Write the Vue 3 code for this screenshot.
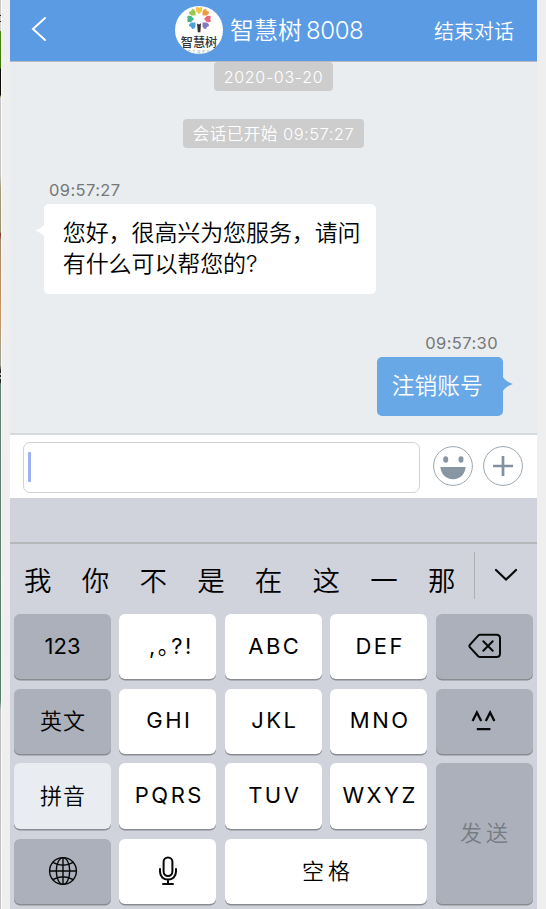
<script setup>
const candidates = ['我', '你', '不', '是', '在', '这', '一', '那']
const petals = [
  { angle: -90, color: '#49b48c' },
  { angle: -45, color: '#9cc84b' },
  { angle: 0, color: '#f2c644' },
  { angle: 45, color: '#f09a43' },
  { angle: 90, color: '#e9677c' },
  { angle: 135, color: '#8278bd' },
  { angle: -135, color: '#4aa4dc' }
]
const keys = [
  { label: '123', type: 'dark', cls: 'num' },
  { label: ',。?!', type: '', cls: 'punct' },
  { label: 'ABC' },
  { label: 'DEF' },
  { icon: 'delete', type: 'dark' },
  { label: '英文', type: 'dark', cls: 'cn' },
  { label: 'GHI' },
  { label: 'JKL' },
  { label: 'MNO' },
  { icon: 'face', type: 'dark' },
  { label: '拼音', type: 'pale', cls: 'cn' },
  { label: 'PQRS' },
  { label: 'TUV' },
  { label: 'WXYZ' },
  { label: '发送', type: 'dark send', cls: 'cn wide' },
  { icon: 'globe', type: 'dark' },
  { icon: 'mic' },
  { label: '空格', type: 'space', cls: 'cn wide' }
]
</script>

<template>
  <div class="page">
    <div class="edge"></div>
    <main class="phone">
      <header class="header">
        <svg class="back" viewBox="0 0 16 26"><path d="M14 2 L2 13 L14 24" /></svg>
        <div class="title">
          <svg class="logo" viewBox="0 0 48 48">
            <defs><clipPath id="disc"><circle cx="24" cy="24" r="24" /></clipPath></defs>
            <circle cx="24" cy="24" r="24" fill="#fff" />
            <g clip-path="url(#disc)">
              <g transform="translate(24 13)">
                <path
                  v-for="p in petals"
                  :key="p.angle"
                  :fill="p.color"
                  :transform="`rotate(${p.angle})`"
                  d="M0 -5 L-2.9 -7.8 Q-4 -11.6 -1.8 -11.9 L0 -11.2 L1.8 -11.9 Q4 -11.6 2.9 -7.8 Z"
                />
              </g>
              <path d="M22 17.6 L24 18.6 L26 17.2 L25.4 26.3 H22.8 Z" fill="#333" />
              <text x="24" y="41.2" class="logo-name">智慧树</text>
              <text x="24.5" y="47.8" class="logo-sub">STREE</text>
            </g>
          </svg>
          <span class="name">智慧树<i>8008</i></span>
        </div>
        <span class="end">结束对话</span>
      </header>

      <section class="chat">
        <div class="chip date">2020-03-20</div>
        <div class="chip start">会话已开始 09:57:27</div>
        <div class="time in">09:57:27</div>
        <div class="bubble in">
          <svg class="tail" viewBox="0 0 10 16"><path d="M10 0 Q8 5 0 7.5 Q8 10 10 15 Z" fill="#fff" /></svg>
          您好，很高兴为您服务，请问<br />有什么可以帮您的?
        </div>
        <div class="time out">09:57:30</div>
        <div class="bubble out">
          <svg class="tail" viewBox="0 0 10 16"><path d="M0 0 Q2 4 10 7 Q2 10 0 14 Z" fill="#68a8e7" /></svg>
          注销账号
        </div>
      </section>

      <section class="composer">
        <div class="field"><span class="caret"></span></div>
        <svg class="round" viewBox="0 0 40 40">
          <circle cx="20" cy="20" r="19.4" class="ring" />
          <ellipse cx="12.7" cy="13.5" rx="2.5" ry="3.3" fill="#8796a2" />
          <ellipse cx="28" cy="13.5" rx="2.5" ry="3.3" fill="#8796a2" />
          <path d="M7.4 21 H32.6 C32.2 28 27 33.3 20 33.3 C13 33.3 7.8 28 7.4 21 Z" fill="#8796a2" />
        </svg>
        <svg class="round" viewBox="0 0 40 40">
          <circle cx="20" cy="20" r="19.4" class="ring" />
          <path d="M10 20 H30 M20 10 V30" stroke="#8291a0" stroke-width="2.7" />
        </svg>
      </section>

      <section class="keyboard">
        <div class="toolbar"></div>
        <div class="candidates">
          <span v-for="c in candidates" :key="c" class="cand">{{ c }}</span>
          <span class="sep"></span>
          <svg class="chev" viewBox="0 0 24 14"><path d="M2 2 L12 11.6 L22 2" /></svg>
        </div>
        <div class="keys">
          <div v-for="(k, i) in keys" :key="i" class="key" :class="k.type">
            <span v-if="k.label" class="label" :class="k.cls">{{ k.label }}</span>
            <svg v-else-if="k.icon === 'delete'" class="glyph del" width="34" height="26" viewBox="0 0 34 26">
              <path d="M12 1.8 H28.5 Q32 1.8 32 5.3 V20.5 Q32 24 28.5 24 H12 Q11 24 10.2 23.2 L2 14.4 Q0.8 13 2 11.6 L10.2 2.6 Q11 1.8 12 1.8 Z" />
              <path d="M15.3 8.3 L24.7 17.7 M24.7 8.3 L15.3 17.7" />
            </svg>
            <svg v-else-if="k.icon === 'face'" class="glyph face" width="26" height="22" viewBox="0 0 26 22">
              <path d="M1.6 11 L5.9 2.5 L10.2 11 M14.8 11 L19.1 2.5 L23.4 11 M5.8 19.2 H19.4" />
            </svg>
            <svg v-else-if="k.icon === 'globe'" class="glyph globe" width="30" height="30" viewBox="0 0 30 30">
              <circle cx="15" cy="15" r="13.4" />
              <ellipse cx="15" cy="15" rx="6.7" ry="13.4" />
              <path d="M1.6 15 H28.4 M15 1.6 V28.4 M4.8 6.4 Q15 12.2 25.2 6.4 M4.8 23.6 Q15 17.8 25.2 23.6" />
            </svg>
            <svg v-else class="glyph mic" width="20" height="30" viewBox="0 0 20 30">
              <rect x="5.6" y="1.4" width="8.8" height="18.6" rx="4.4" />
              <path d="M2 13 V15.5 C2 20.5 5.5 23.6 10 23.6 C14.5 23.6 18 20.5 18 15.5 V13 M10 23.6 V28 M5 28 H15" />
            </svg>
          </div>
        </div>
      </section>
    </main>
  </div>
</template>

<style>
body {
  margin: 0;
}
</style>

<style scoped>
.page {
  display: flex;
  width: 546px;
  height: 909px;
  overflow: hidden;
  background: #efeff0;
  font-family: Inter, 'Noto Sans CJK SC', sans-serif;
}
.edge {
  flex: none;
  width: 1px;
  margin-right: 9px;
  background: linear-gradient(
    #c8c8ca 0 15px, #222 15px 16px, #c8c8ca 16px 21px, #222 21px 22px, #d0d0d0 22px 31px,
    #4f8c0c 31px, #3c7807 68px, #080a04 69px 95px, #7c8c40 96px, #c5c5c7 98px,
    #c7c5c3 175px, #a39a7c 188px, #9b8f6c 232px, #7d2c26 234px, #a58a6c 240px, #c69460 310px,
    #9ba092 365px, #222 371px 373px, #a9b4ac 373px 375px, #222 375px 377px, #a9b4ac 377px 379px, #222 379px 382px,
    #617f70 384px, #557f6b 700px, #b9bbbb 710px, #c4c4c6 909px
  );
  box-shadow: 1px 0 0 #fafafa;
}
.phone {
  display: flex;
  flex: none;
  flex-direction: column;
  width: 527px;
}
.header {
  display: flex;
  box-sizing: border-box;
  align-items: center;
  height: 62px;
  padding: 0 23px 0 21px;
  border-bottom: 1px solid #b7babf;
  background: #5b9be4;
  color: #fff;
  font-weight: 350;
}
.back {
  width: 16px;
  height: 26px;
  margin-top: -3px;
  fill: none;
  stroke: #fff;
  stroke-width: 2;
  stroke-linecap: round;
}
.title {
  display: flex;
  align-items: center;
  margin-left: 128px;
}
.logo {
  width: 48px;
  height: 48px;
  margin-top: -1px;
}
.logo-name {
  fill: #333;
  font-size: 12.2px;
  font-weight: 500;
  text-anchor: middle;
}
.logo-sub {
  fill: #888;
  font-size: 5px;
  letter-spacing: 1.8px;
  text-anchor: middle;
}
.name {
  margin: 1px 0 0 7px;
  font-size: 24px;
  line-height: 36px;
  white-space: nowrap;
}
.name i {
  margin-left: 4px;
  font-style: normal;
  letter-spacing: -0.4px;
}
.end {
  margin: 2px 0 0 auto;
  font-size: 20px;
  line-height: 30px;
  white-space: nowrap;
}
.chat {
  display: flex;
  box-sizing: border-box;
  flex-direction: column;
  align-items: flex-start;
  height: 373px;
  border-bottom: 2px solid #d5dadd;
  background: #e9edf0;
}
.chip {
  box-sizing: border-box;
  align-self: center;
  height: 29px;
  border-radius: 4px;
  background: #cdcdcd;
  color: #fff;
  font-size: 16px;
  font-weight: 350;
  line-height: 30px;
  text-align: center;
  white-space: nowrap;
}
.date {
  width: 119px;
  letter-spacing: 0.7px;
}
.start {
  width: 181px;
  margin-top: 28px;
  font-size: 16.5px;
  letter-spacing: 0.5px;
}
.time {
  height: 20px;
  color: #777;
  font-size: 16.5px;
  letter-spacing: 0.4px;
  line-height: 20px;
}
.time.in {
  margin: 32px 0 0 39px;
}
.time.out {
  align-self: flex-end;
  margin: 39px 39px 0 0;
}
.bubble {
  position: relative;
  box-sizing: border-box;
  border-radius: 5px;
  font-size: 23px;
  font-weight: 350;
  white-space: nowrap;
}
.bubble.in {
  width: 332px;
  height: 90px;
  margin: 4px 0 0 34.3px;
  padding: 14px 0 0 18.5px;
  background: #fff;
  color: #000;
  letter-spacing: -0.1px;
  line-height: 31px;
}
.bubble.out {
  align-self: flex-end;
  width: 125.6px;
  height: 59px;
  margin: 4px 34px 0 0;
  background: #68a8e7;
  color: #fff;
  font-size: 22.7px;
  line-height: 58px;
  text-align: center;
  text-indent: -6px;
}
.tail {
  position: absolute;
  width: 10px;
  height: 16px;
}
.in .tail {
  top: 19px;
  left: -9.5px;
}
.out .tail {
  top: 20px;
  right: -9.5px;
}
.composer {
  display: flex;
  box-sizing: border-box;
  align-items: center;
  height: 63px;
  padding: 0 14px 0 12.5px;
  background: #fff;
}
.field {
  display: flex;
  box-sizing: border-box;
  align-items: center;
  width: 397.5px;
  height: 51px;
  margin-top: 2px;
  padding-left: 4.5px;
  border: 1.3px solid #d0d1d2;
  border-radius: 7px;
}
.caret {
  width: 3px;
  height: 30px;
  margin-top: -2px;
  border-radius: 1px;
  background: #9eaff2;
}
.round {
  width: 40px;
  height: 40px;
  margin: -1px 0 0 12.5px;
}
.round + .round {
  margin-left: 10.5px;
}
.ring {
  fill: none;
  stroke: #9aa6b0;
  stroke-width: 1;
}
.keyboard {
  height: 411px;
  background: #d0d3dc;
}
.toolbar {
  height: 44px;
  border-bottom: 2px solid #b5b7bb;
}
.candidates {
  display: flex;
  align-items: center;
  height: 70px;
  margin-left: -1px;
}
.cand {
  width: 57.7px;
  padding-top: 4px;
  color: #000;
  font-size: 27.5px;
  font-weight: 350;
  line-height: 40px;
  text-align: center;
}
.sep {
  width: 1px;
  height: 47px;
  margin: -7px 19.5px 0 3.4px;
  background: #adafb4;
}
.chev {
  width: 24px;
  height: 14px;
  margin-top: -9px;
  fill: none;
  stroke: #0a0a0a;
  stroke-width: 2.2;
  stroke-linecap: round;
}
.keys {
  display: grid;
  grid-template-rows: 65px 65px 66px 65px;
  grid-template-columns: repeat(5, 97px);
  gap: 9.6px 8.4px;
  padding: 0 4px;
}
.key {
  display: flex;
  align-items: center;
  justify-content: center;
  border-radius: 6px;
  background: #fff;
  box-shadow: 0 1.4px 0 #898b90;
  color: #000;
}
.dark {
  background: #abb0ba;
}
.pale {
  background: #e9edf1;
}
.send {
  grid-row: span 2;
  color: #777b83;
}
.space {
  grid-column: span 2;
}
.label {
  margin: -2px -3px 0 0;
  font-size: 22px;
  font-weight: 370;
  letter-spacing: 2.5px;
  line-height: 32px;
  white-space: nowrap;
}
.num {
  margin-right: 0;
  letter-spacing: 0;
}
.punct {
  margin: -2px -7px 0 0;
  font-feature-settings: 'halt';
}
.cn {
  margin: 0 -1px 0 0;
  font-weight: 350;
  letter-spacing: 1px;
}
.wide {
  margin-right: -4px;
  letter-spacing: 4px;
}
.glyph {
  fill: none;
  stroke: #080808;
  stroke-width: 2;
  stroke-linecap: round;
  stroke-linejoin: round;
}
.del {
  margin: -1px 0 0 1px;
}
.face {
  margin-top: -1px;
  stroke-width: 2.3;
  stroke-linecap: butt;
  stroke-linejoin: miter;
}
.globe {
  stroke-width: 1.4;
}
.mic {
  stroke-width: 2;
}
</style>
